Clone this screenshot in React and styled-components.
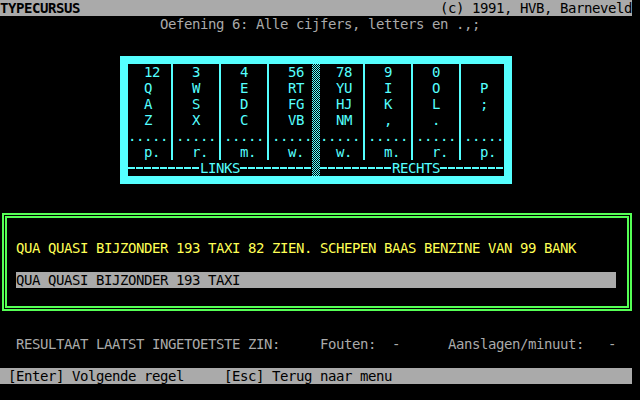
import React from 'react'
import styled, { createGlobalStyle } from 'styled-components'

const GRAY = '#aaaaaa'
const CYAN = '#55ffff'
const GREEN = '#55ff55'
const YELLOW = '#ffff55'
const COL = 8

const GlobalStyle = createGlobalStyle`
    html, body {
        margin: 0;
        padding: 0;
        background: #000;
    }
`

const Screen = styled.div`
    width: 640px;
    height: 400px;
    background: #000;
    color: ${GRAY};
    font-family: "DejaVu Sans Mono", "Liberation Mono", monospace;
    font-size: 14px;
    letter-spacing: -0.43px;
    line-height: 16px;
    white-space: pre;
    overflow: hidden;
    display: flex;
    flex-direction: column;
`

const Bar = styled.div`
    width: 632px;
    height: 16px;
    flex-shrink: 0;
    box-sizing: border-box;
    background: ${GRAY};
    color: #000;
    display: flex;
    justify-content: ${props => props.$spread ? 'space-between' : 'flex-start'};
    padding-left: ${props => (props.$indent || 0) * COL}px;
    margin-top: ${props => props.$top || 0}px;
`

const Brand = styled.span`
    font-weight: bold;
`

const Span = styled.span`
    display: inline-block;
    width: ${props => props.$cols ? props.$cols * COL + 'px' : 'auto'};
`

const Line = styled.div`
    height: 16px;
    flex-shrink: 0;
    padding-left: ${props => (props.$indent || 0) * COL}px;
    margin-top: ${props => props.$top || 0}px;
    color: ${props => props.$color || 'inherit'};
    display: flex;
`

const Panel = styled.div`
    margin: 24px 0 0 120px;
    width: 392px;
    padding: 8px;
    box-sizing: border-box;
    background: ${CYAN};
    flex-shrink: 0;
`

const PanelInner = styled.div`
    background: #000;
    color: ${CYAN};
    height: 112px;
    display: flex;
`

const Half = styled.div`
    width: 184px;
    display: flex;
    flex-direction: column;
`

const Keys = styled.div`
    height: 96px;
    display: flex;
`

const Group = styled.div`
    width: 40px;
    display: flex;
    flex-direction: column;
`

const Divider = styled.div`
    width: 8px;
    background: linear-gradient(to right, transparent 3px, ${CYAN} 3px, ${CYAN} 5px, transparent 5px);
`

const Dither = styled.div`
    width: 8px;
    background: repeating-conic-gradient(${CYAN} 0 25%, #000 0 50%) 0 0 / 2px 2px;
`

const Legend = styled.div`
    height: 16px;
    display: flex;
    align-items: center;
`

const Dash = styled.div`
    height: 2px;
    width: ${props => props.$cols ? props.$cols * COL + 'px' : 'auto'};
    flex: ${props => props.$cols ? 'none' : 1};
    background: repeating-linear-gradient(to right, ${CYAN} 0 7px, transparent 7px 8px);
`

const Exercise = styled.div`
    margin: 29px 0 0 2px;
    width: 630px;
    height: 98px;
    flex-shrink: 0;
    box-sizing: border-box;
    border: 2px solid ${GREEN};
    padding: 1px;
`

const ExerciseInner = styled.div`
    height: 100%;
    box-sizing: border-box;
    border: 2px solid ${GREEN};
    padding: 22px 0 0 9px;
`

const Input = styled.div`
    margin-top: 16px;
    width: 600px;
    height: 16px;
    background: ${GRAY};
    color: #000;
`

const left = [
    { keys: ['12', 'Q', 'A', 'Z'], finger: 'p.' },
    { keys: ['3', 'W', 'S', 'X'], finger: 'r.' },
    { keys: ['4', 'E', 'D', 'C'], finger: 'm.' },
    { keys: ['56', 'RT', 'FG', 'VB'], finger: 'w.' },
]

const right = [
    { keys: ['78', 'YU', 'HJ', 'NM'], finger: 'w.' },
    { keys: ['9', 'I', 'K', ','], finger: 'm.' },
    { keys: ['0', 'O', 'L', '.'], finger: 'r.' },
    { keys: ['', 'P', ';', ''], finger: 'p.' },
]

const Hand = ({ groups, label, dashLeft }) => (
    <Half>
        <Keys>
            {groups.map((g, i) => (
                <React.Fragment key={i}>
                    {i > 0 && <Divider />}
                    <Group>
                        {g.keys.map((k, j) => <Line key={j} $indent={2}>{k}</Line>)}
                        <Line>.....</Line>
                        <Line $indent={2}>{g.finger}</Line>
                    </Group>
                </React.Fragment>
            ))}
        </Keys>
        <Legend>
            <Dash $cols={dashLeft} />
            <span>{label}</span>
            <Dash />
        </Legend>
    </Half>
)

const App = () => {
    return (
        <Screen>
            <GlobalStyle />
            <Bar $spread>
                <Brand>TYPECURSUS</Brand>
                <span>(c) 1991, HVB, Barneveld</span>
            </Bar>
            <Line $indent={20}>Oefening 6: Alle cijfers, letters en .,;</Line>

            <Panel>
                <PanelInner>
                    <Hand groups={left} label='LINKS' dashLeft={9} />
                    <Dither />
                    <Hand groups={right} label='RECHTS' dashLeft={9} />
                </PanelInner>
            </Panel>

            <Exercise>
                <ExerciseInner>
                    <Line $color={YELLOW}>QUA QUASI BIJZONDER 193 TAXI 82 ZIEN. SCHEPEN BAAS BENZINE VAN 99 BANK</Line>
                    <Input>QUA QUASI BIJZONDER 193 TAXI</Input>
                </ExerciseInner>
            </Exercise>

            <Line $indent={2} $top={25}>
                <Span $cols={38}>RESULTAAT LAATST INGETOETSTE ZIN:</Span>
                <Span $cols={9}>Fouten:</Span>
                <Span $cols={7}>-</Span>
                <Span $cols={20}>Aanslagen/minuut:</Span>
                <Span>-</Span>
            </Line>

            <Bar $indent={1} $top={16}>
                <Span $cols={27}>[Enter] Volgende regel</Span>
                <Span>[Esc] Terug naar menu</Span>
            </Bar>
        </Screen>
    )
}

export default App
